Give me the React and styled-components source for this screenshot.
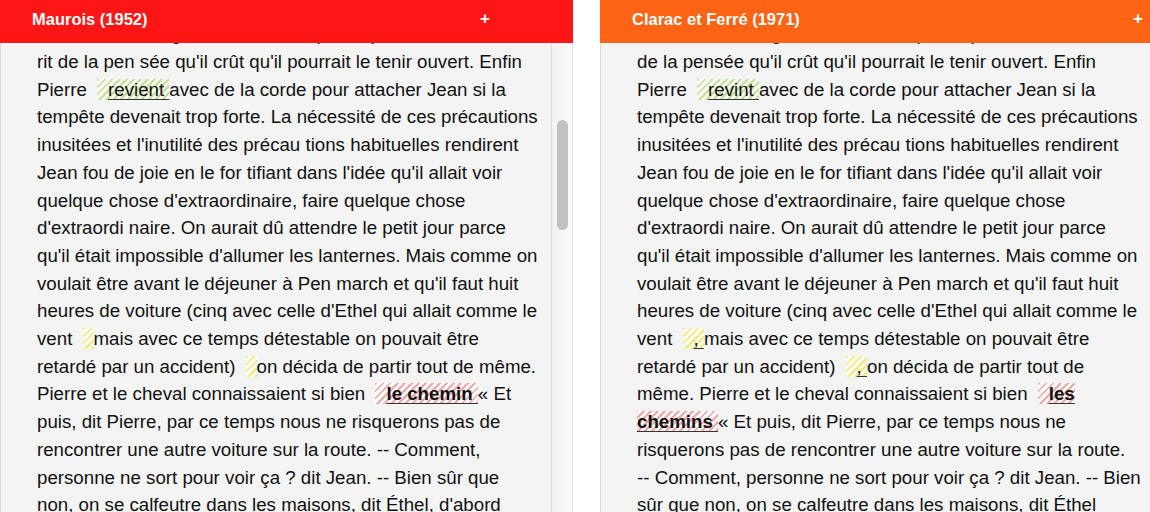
import React, { useLayoutEffect, useRef } from "react";
import styled, { createGlobalStyle } from "styled-components";

const GlobalStyle = createGlobalStyle`
  html, body { margin: 0; padding: 0; background: #fff; overflow: hidden; }
  body { font-family: "Liberation Sans", Arial, sans-serif; }
`;

const Page = styled.div`
  display: flex;
  gap: 27px;
  width: 1200px;
  height: 512px;
`;

const Panel = styled.section`
  flex: 0 0 573px;
  display: flex;
  flex-direction: column;
  height: 512px;
`;

const Header = styled.header`
  flex: none;
  height: 43px;
  box-sizing: border-box;
  display: flex;
  justify-content: space-between;
  align-items: flex-start;
  padding: 9px ${(p) => p.$plusRight}px 0 32px;
  background: ${(p) => p.$color};
  color: #fff;
  font-size: 16.5px;
  font-weight: bold;
  line-height: 20px;
`;

const Plus = styled.span`
  font-size: 17px;
`;

const Body = styled.div`
  flex: 1;
  min-height: 0;
  display: flex;
  background: #f4f4f4;
  border-left: 1px solid #dadada;
`;

const Scroller = styled.div`
  flex: 1;
  overflow: hidden;
`;

const Track = styled.div`
  flex: 0 0 22px;
  box-sizing: border-box;
  background: linear-gradient(to right, #f1f1f1, #fbfbfb);
  border-left: 1px solid #dcdcdc;
  border-right: 1px solid #e6e6e6;
`;

const Thumb = styled.div`
  width: 11px;
  height: 110px;
  margin: 77px 0 0 5px;
  border-radius: 6px;
  background: #c1c1c1;
`;

const Column = styled.div`
  padding: 10px 4px 40px 36px;
  font-size: 18.7px;
  line-height: 27.7px;
  color: #111;
`;

const Prose = styled.p`
  margin: 0;
`;

const Lines = styled.p`
  margin: 0;
  white-space: nowrap;
`;

const tones = {
  green: "#c3e396",
  yellow: "#efed70",
  red: "#f5a8a8",
};

const Mark = styled.span`
  margin-left: 5px;
  padding-left: 11px;
  background: repeating-linear-gradient(
    135deg,
    ${(p) => tones[p.$tone]} 0 2px,
    rgba(255, 255, 255, 0.5) 2px 5px
  );
  -webkit-box-decoration-break: slice;
  box-decoration-break: slice;
`;

const Changed = styled.span`
  font-weight: ${(p) => (p.$bold ? "bold" : "normal")};
  text-decoration: underline;
  text-decoration-color: #333;
  text-underline-offset: 3px;
`;

function Edition({ title, color, plusRight, before, after, children }) {
  const scrollRef = useRef(null);
  const visibleRef = useRef(null);

  useLayoutEffect(() => {
    const box = scrollRef.current.getBoundingClientRect();
    const vis = visibleRef.current.getBoundingClientRect();
    scrollRef.current.scrollTop = vis.top - box.top - 5.5;
  }, []);

  return (
    <Panel>
      <Header $color={color} $plusRight={plusRight}>
        <span>{title}</span>
        <Plus>+</Plus>
      </Header>
      <Body>
        <Scroller ref={scrollRef}>
          <Column>
            <Prose>{before}</Prose>
            <Lines ref={visibleRef}>{children}</Lines>
            <Prose>{after}</Prose>
          </Column>
        </Scroller>
        <Track>
          <Thumb />
        </Track>
      </Body>
    </Panel>
  );
}

const BEFORE =
  "Le lendemain matin, quand Jean descendit, le vent soufflait avec tant de force contre la maison qu'on entendait craquer les poutres du grenier, et la pluie, chassée par les rafales, frappait les vitres comme une poignée de gravier. Pierre était déjà dans la cour, occupé à atteler le cheval, et il expliqua à Jean qu'on ne pourrait pas suivre la route de la côte, que les vagues passaient par-dessus la digue et que le plus sage serait de prendre par les terres. Jean, qui avait craint un moment qu'on ne renonçât à l'expédition, sentit au contraire, à ce mot de danger, une sorte de porte qui s'ouv";

const AFTER =
  "parce qu'on a peur de la mer. Jean se tut, et regardant la lande noire où la pluie courait comme une fumée, il lui sembla qu'ils étaient seuls au monde, emportés dans la nuit vers une ville inconnue.";

export default function App() {
  return (
    <>
      <GlobalStyle />
      <Page>
        <Edition title="Maurois (1952)" color="#fe1616" plusRight={83} before={BEFORE} after={AFTER}>
          rit de la pen sée qu'il crût qu'il pourrait le tenir ouvert. Enfin<br />
          Pierre <Mark $tone="green"><Changed>revient </Changed></Mark>avec de la corde pour attacher Jean si la<br />
          tempête devenait trop forte. La nécessité de ces précautions<br />
          inusitées et l'inutilité des précau tions habituelles rendirent<br />
          Jean fou de joie en le for tifiant dans l'idée qu'il allait voir<br />
          quelque chose d'extraordinaire, faire quelque chose<br />
          d'extraordi naire. On aurait dû attendre le petit jour parce<br />
          qu'il était impossible d'allumer les lanternes. Mais comme on<br />
          voulait être avant le déjeuner à Pen march et qu'il faut huit<br />
          heures de voiture (cinq avec celle d'Ethel qui allait comme le<br />
          vent <Mark $tone="yellow" /> mais avec ce temps détestable on pouvait être<br />
          retardé par un accident) <Mark $tone="yellow" />on décida de partir tout de même.<br />
          Pierre et le cheval connaissaient si bien <Mark $tone="red"><Changed $bold>le chemin </Changed></Mark>« Et<br />
          puis, dit Pierre, par ce temps nous ne risquerons pas de<br />
          rencontrer une autre voiture sur la route. -- Comment,<br />
          personne ne sort pour voir ça ? dit Jean. -- Bien sûr que<br />
          non, on se calfeutre dans les maisons, dit Éthel, d'abord
        </Edition>
        <Edition
          title="Clarac et Ferré (1971)"
          color="#fe6414"
          plusRight={30}
          before={BEFORE + "rit"}
          after={AFTER}
        >
          de la pensée qu'il crût qu'il pourrait le tenir ouvert. Enfin<br />
          Pierre <Mark $tone="green"><Changed>revint </Changed></Mark>avec de la corde pour attacher Jean si la<br />
          tempête devenait trop forte. La nécessité de ces précautions<br />
          inusitées et l'inutilité des précau tions habituelles rendirent<br />
          Jean fou de joie en le for tifiant dans l'idée qu'il allait voir<br />
          quelque chose d'extraordinaire, faire quelque chose<br />
          d'extraordi naire. On aurait dû attendre le petit jour parce<br />
          qu'il était impossible d'allumer les lanternes. Mais comme on<br />
          voulait être avant le déjeuner à Pen march et qu'il faut huit<br />
          heures de voiture (cinq avec celle d'Ethel qui allait comme le<br />
          vent <Mark $tone="yellow"><Changed>, </Changed></Mark>mais avec ce temps détestable on pouvait être<br />
          retardé par un accident) <Mark $tone="yellow"><Changed>, </Changed></Mark>on décida de partir tout de<br />
          même. Pierre et le cheval connaissaient si bien <Mark $tone="red"><Changed $bold>les<br />chemins </Changed></Mark>« Et puis, dit Pierre, par ce temps nous ne<br />
          risquerons pas de rencontrer une autre voiture sur la route.<br />
          -- Comment, personne ne sort pour voir ça ? dit Jean. -- Bien<br />
          sûr que non, on se calfeutre dans les maisons, dit Éthel
        </Edition>
      </Page>
    </>
  );
}
